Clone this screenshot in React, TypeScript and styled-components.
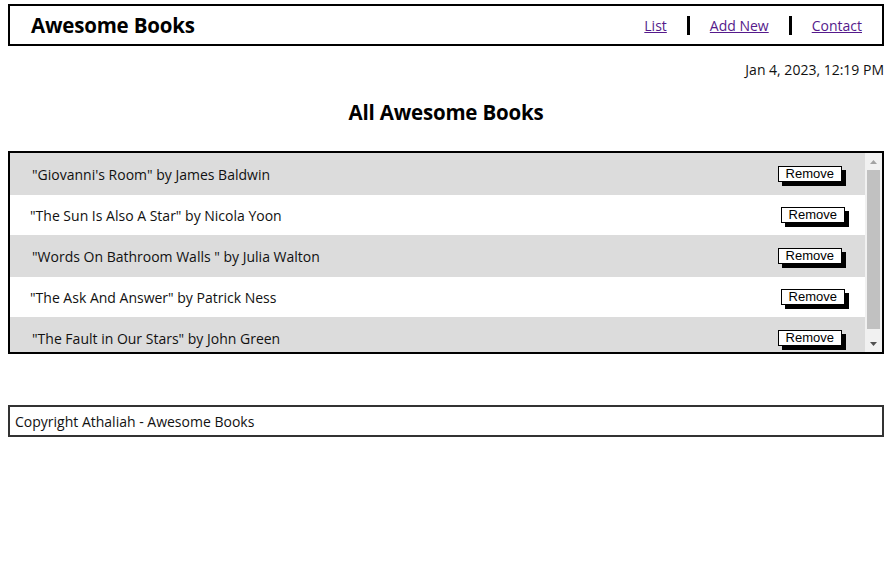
import React from "react";
import styled, { createGlobalStyle } from "styled-components";

const GlobalStyle = createGlobalStyle`
  html, body {
    margin: 0;
    padding: 0;
    background: #fff;
  }
  body {
    padding: 4px 9px 0 8px;
    font-family: "Open Sans", "Noto Sans", sans-serif;
    color: #111;
  }
`;

const Header = styled.header`
  display: flex;
  align-items: center;
  justify-content: space-between;
  height: 42px;
  box-sizing: border-box;
  border: 2px solid #000;
  padding: 0 0 0 21px;
`;

const Logo = styled.h1`
  margin: 0;
  font-size: 20.5px;
  font-weight: 700;
  color: #000;
  letter-spacing: -0.2px;
`;

const Nav = styled.ul`
  display: flex;
  list-style: none;
  margin: 0;
  padding: 0;
`;

const NavItem = styled.li<{ $last?: boolean }>`
  padding: 0 20px;
  line-height: 18px;
  border-right: ${(p) => (p.$last ? "none" : "3px solid #000")};
`;

const NavLink = styled.a`
  font-size: 14px;
  color: #551a8b;
  text-decoration: underline;
`;

const DateLine = styled.p`
  margin: 14px 0 0;
  text-align: right;
  font-size: 14px;
  line-height: 20px;
  color: #111;
`;

const Title = styled.h2`
  margin: 20px 0 27px;
  text-align: center;
  font-size: 20.5px;
  line-height: 24px;
  font-weight: 700;
  color: #000;
  letter-spacing: -0.2px;
`;

const BookPanel = styled.section`
  display: flex;
  height: 203px;
  box-sizing: border-box;
  border: 2px solid #000;
`;

const BookList = styled.ul`
  flex: 1;
  list-style: none;
  margin: 0;
  padding: 0;
  overflow: hidden;
`;

const ScrollTrack = styled.div`
  width: 17px;
  display: flex;
  flex-direction: column;
  background: #f1f1f1;
`;

const ScrollArrow = styled.div<{ $h: number }>`
  height: ${(p) => p.$h}px;
  display: flex;
  align-items: center;
  justify-content: center;
`;

const ThumbArea = styled.div`
  flex: 1;
  padding: 0 2px;
`;

const Thumb = styled.div`
  height: 159px;
  background: #c1c1c1;
`;

const BookRow = styled.li<{ $shaded: boolean }>`
  display: flex;
  align-items: center;
  justify-content: space-between;
  box-sizing: border-box;
  height: ${(p) => (p.$shaded ? "42px" : "40px")};
  padding: ${(p) => (p.$shaded ? "0 23px 0 22px" : "0 20px 0 20px")};
  background: ${(p) => (p.$shaded ? "#dcdcdc" : "#fff")};
`;

const BookText = styled.span`
  font-size: 14px;
  color: #111;
`;

const RemoveButton = styled.button`
  font-family: "Liberation Sans", Arial, sans-serif;
  font-size: 13px;
  line-height: 14px;
  padding: 0 7px;
  height: 16px;
  background: #fff;
  color: #000;
  border: 1px solid #000;
  border-radius: 0;
  box-shadow: 4px 4px 0 #000;
  cursor: pointer;
`;

const Footer = styled.footer`
  margin-top: 51px;
  height: 32px;
  box-sizing: border-box;
  border: 2px solid #333;
  display: flex;
  align-items: center;
  padding: 0 5px;
  font-size: 14px;
  color: #111;
`;

const books = [
  { title: "Giovanni's Room", author: "James Baldwin" },
  { title: "The Sun Is Also A Star", author: "Nicola Yoon" },
  { title: "Words On Bathroom Walls ", author: "Julia Walton" },
  { title: "The Ask And Answer", author: "Patrick Ness" },
  { title: "The Fault in Our Stars", author: "John Green" },
];

export default function App() {
  return (
    <>
      <GlobalStyle />
      <Header>
        <Logo>Awesome Books</Logo>
        <Nav>
          <NavItem>
            <NavLink href="#list">List</NavLink>
          </NavItem>
          <NavItem>
            <NavLink href="#add">Add New</NavLink>
          </NavItem>
          <NavItem $last>
            <NavLink href="#contact">Contact</NavLink>
          </NavItem>
        </Nav>
      </Header>
      <DateLine>Jan 4, 2023, 12:19 PM</DateLine>
      <Title>All Awesome Books</Title>
      <BookPanel>
        <BookList>
          {books.map((b, i) => (
            <BookRow key={i} $shaded={i % 2 === 0}>
              <BookText>
                "{b.title}" by {b.author}
              </BookText>
              <RemoveButton type="button">Remove</RemoveButton>
            </BookRow>
          ))}
        </BookList>
        <ScrollTrack aria-hidden="true">
          <ScrollArrow $h={17}>
            <svg width="7" height="4" viewBox="0 0 7 4">
              <polygon points="3.5,0 7,4 0,4" fill="#a3a3a3" />
            </svg>
          </ScrollArrow>
          <ThumbArea>
            <Thumb />
          </ThumbArea>
          <ScrollArrow $h={16}>
            <svg width="7" height="4" viewBox="0 0 7 4">
              <polygon points="0,0 7,0 3.5,4" fill="#505050" />
            </svg>
          </ScrollArrow>
        </ScrollTrack>
      </BookPanel>
      <Footer>Copyright Athaliah - Awesome Books</Footer>
    </>
  );
}
